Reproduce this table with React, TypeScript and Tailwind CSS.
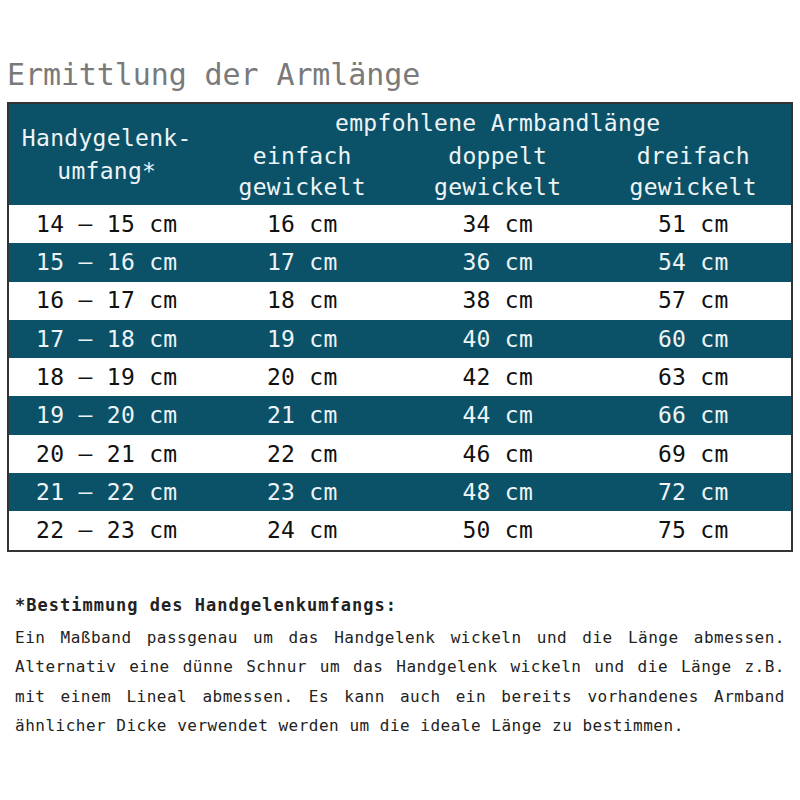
import React from "react";

const rows = [
  ["14 – 15 cm", "16 cm", "34 cm", "51 cm"],
  ["15 – 16 cm", "17 cm", "36 cm", "54 cm"],
  ["16 – 17 cm", "18 cm", "38 cm", "57 cm"],
  ["17 – 18 cm", "19 cm", "40 cm", "60 cm"],
  ["18 – 19 cm", "20 cm", "42 cm", "63 cm"],
  ["19 – 20 cm", "21 cm", "44 cm", "66 cm"],
  ["20 – 21 cm", "22 cm", "46 cm", "69 cm"],
  ["21 – 22 cm", "23 cm", "48 cm", "72 cm"],
  ["22 – 23 cm", "24 cm", "50 cm", "75 cm"],
];

const App = () => {
  return (
    <div className="w-[800px] h-[800px] bg-white font-['DejaVu_Sans_Mono',monospace] overflow-hidden">
      <div className="px-[7px] pt-[56px]">
        <h1 className="text-[30px] leading-[38px] text-[#7a7a7a] tracking-[-0.1px]">
          Ermittlung der Armlänge
        </h1>

        {/* Tabelle */}
        <div className="mt-[8px] w-[786px] border-2 border-[#333] text-[23px] tracking-[0.3px]">
          <div className="grid grid-cols-4 bg-[#0b5268] text-[#eef4f6] h-[101px]">
            <div className="flex flex-col items-center justify-center leading-[33px]">
              <span>Handygelenk-</span>
              <span>umfang*</span>
            </div>
            <div className="col-span-3 flex flex-col">
              <div className="text-center leading-[32px] pt-[3px]">empfohlene Armbandlänge</div>
              <div className="grid grid-cols-3 leading-[31px] pt-[2px]">
                <div className="flex flex-col items-center">
                  <span>einfach</span>
                  <span>gewickelt</span>
                </div>
                <div className="flex flex-col items-center">
                  <span>doppelt</span>
                  <span>gewickelt</span>
                </div>
                <div className="flex flex-col items-center">
                  <span>dreifach</span>
                  <span>gewickelt</span>
                </div>
              </div>
            </div>
          </div>
          {rows.map((r, i) => (
            <div
              key={i}
              className={
                i % 2 === 1
                  ? "grid grid-cols-4 h-[38.3px] items-center bg-[#0b5268] text-[#eef4f6]"
                  : "grid grid-cols-4 h-[38.3px] items-center bg-white text-[#111]"
              }
            >
              {r.map((c, j) => (
                <div key={j} className="text-center whitespace-pre">
                  {c}
                </div>
              ))}
            </div>
          ))}
        </div>

        <div className="px-[8px] text-[#222]">
          <p className="mt-[41px] font-bold text-[17px] tracking-[1px] leading-[24px]">
            *Bestimmung des Handgelenkumfangs:
          </p>
          <p className="mt-[6px] text-[16px] tracking-[0.5px] leading-[29.5px] text-justify">
            Ein Maßband passgenau um das Handgelenk wickeln und die Länge abmessen.
            Alternativ eine dünne Schnur um das Handgelenk wickeln und die Länge z.B.
            mit einem Lineal abmessen. Es kann auch ein bereits vorhandenes Armband
            ähnlicher Dicke verwendet werden um die ideale Länge zu bestimmen.
          </p>
        </div>
      </div>
    </div>
  );
};

export default App;
